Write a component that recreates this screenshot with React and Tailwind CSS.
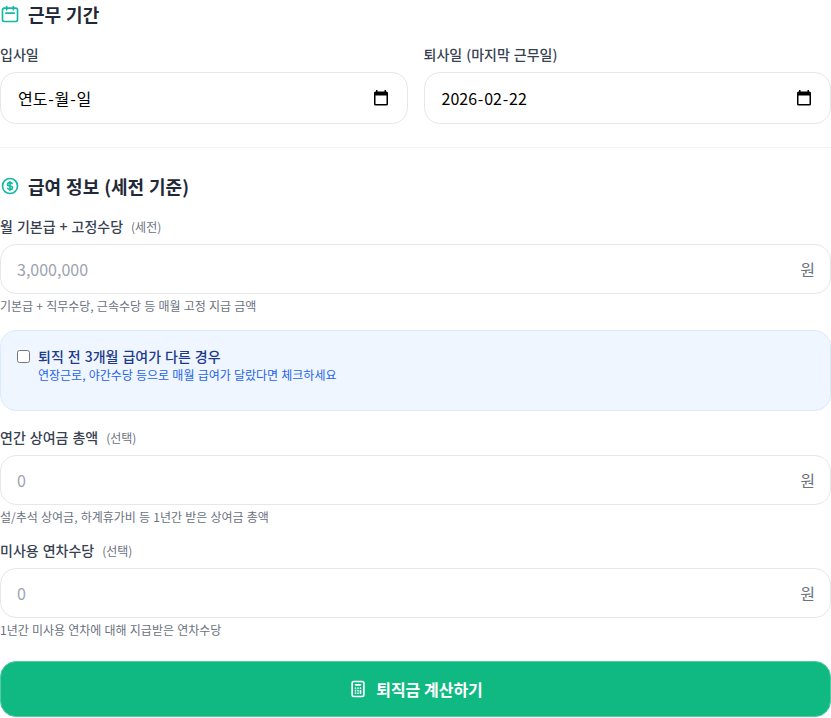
function CalendarPicker() {
  return (
    <svg width="20" height="20" viewBox="0 0 20 20" className="shrink-0">
      <path
        fill="#000"
        d="M5 2h1.5v1.5h7V2H15v1.5h.5A1.5 1.5 0 0 1 17 5v11a1.5 1.5 0 0 1-1.5 1.5h-11A1.5 1.5 0 0 1 3 16V5a1.5 1.5 0 0 1 1.5-1.5H5V2zM4.5 7.5V16h11V7.5h-11z"
      />
    </svg>
  );
}

function OutlineIcon({ d, className }) {
  return (
    <svg className={className} fill="none" stroke="currentColor" viewBox="0 0 24 24">
      <path strokeLinecap="round" strokeLinejoin="round" strokeWidth="2" d={d} />
    </svg>
  );
}

function DateField({ label, parts }) {
  return (
    <div>
      <label className="block mb-2 text-sm font-medium text-[#374151]">{label}</label>
      <div className="flex items-center justify-between h-[52px] pl-[17px] pr-[16px] bg-white border border-[#e5e7eb] rounded-2xl text-base text-black">
        <span>
          {parts[0]}
          <span className="px-[0.8px]">-</span>
          {parts[1]}
          <span className="px-[0.8px]">-</span>
          {parts[2]}
        </span>
        <CalendarPicker />
      </div>
    </div>
  );
}

function MoneyField({ label, note, placeholder, hint }) {
  return (
    <div>
      <label className="block mb-2 text-sm font-medium text-[#374151]">
        {label}
        {note ? <span className="ml-2 text-xs font-normal text-[#6b7280]">{note}</span> : null}
      </label>
      <div className="relative">
        <input
          type="text"
          placeholder={placeholder}
          className="w-full h-[50px] px-4 bg-white border border-[#e5e7eb] rounded-2xl text-base text-[#111827] placeholder:text-[#9ca3af]"
        />
        <span className="absolute right-4 top-1/2 -translate-y-1/2 text-base text-[#6b7280]">원</span>
      </div>
      <p className="mt-1 text-xs text-[#6b7280] [word-spacing:0.042em]">{hint}</p>
    </div>
  );
}

export default function App() {
  return (
    <div className="w-[831px] h-[718px] overflow-hidden bg-white font-['Noto_Sans_CJK_KR',sans-serif] [word-spacing:0.054em]">
      <section className="pb-[23px] border-b border-[#f3f4f6]">
        <h3 className="flex items-center gap-2 mb-4 text-lg font-bold text-[#1f2937]">
          <OutlineIcon
            className="w-5 h-5 text-[#14b8a6]"
            d="M8 7V3m8 4V3m-9 8h10M5 21h14a2 2 0 002-2V7a2 2 0 00-2-2H5a2 2 0 00-2 2v12a2 2 0 002 2z"
          />
          근무 기간
        </h3>
        <div className="grid grid-cols-2 gap-4">
          <DateField label="입사일" parts={["연도", "월", "일"]} />
          <DateField label="퇴사일 (마지막 근무일)" parts={["2026", "02", "22"]} />
        </div>
      </section>

      <section className="mt-6">
        <h3 className="flex items-center gap-2 mb-4 text-lg font-bold text-[#1f2937]">
          <OutlineIcon
            className="w-5 h-5 text-[#14b8a6]"
            d="M12 8c-1.657 0-3 .895-3 2s1.343 2 3 2 3 .895 3 2-1.343 2-3 2m0-8c1.11 0 2.08.402 2.599 1M12 8V7m0 1v8m0 0v1m0-1c-1.11 0-2.08-.402-2.599-1M21 12a9 9 0 11-18 0 9 9 0 0118 0z"
          />
          급여 정보 (세전 기준)
        </h3>
        <MoneyField
          label="월 기본급 + 고정수당"
          note="(세전)"
          placeholder="3,000,000"
          hint="기본급 + 직무수당, 근속수당 등 매월 고정 지급 금액"
        />
        <div className="h-[81px] mt-4 mb-4 px-4 pt-[15px] bg-[#eff6ff] border border-[#dbeafe] rounded-2xl">
          <label className="flex items-start gap-2">
            <input type="checkbox" className="w-[13px] h-[13px] mt-1" />
            <span>
              <span className="block text-sm font-medium text-[#1e3a8a]">퇴직 전 3개월 급여가 다른 경우</span>
              <span className="block mt-px text-xs text-[#2563eb] [word-spacing:0.042em]">연장근로, 야간수당 등으로 매월 급여가 달랐다면 체크하세요</span>
            </span>
          </label>
        </div>
        <div className="flex flex-col gap-[15px]">
          <MoneyField
            label="연간 상여금 총액"
            note="(선택)"
            placeholder="0"
            hint="설/추석 상여금, 하계휴가비 등 1년간 받은 상여금 총액"
          />
          <MoneyField
            label="미사용 연차수당"
            note="(선택)"
            placeholder="0"
            hint="1년간 미사용 연차에 대해 지급받은 연차수당"
          />
        </div>
        <button className="flex items-center justify-center gap-2 w-full h-14 mt-[23px] bg-[#10b981] border border-[#52cba0] rounded-2xl text-base font-bold text-white">
          <OutlineIcon
            className="w-5 h-5"
            d="M9 7h6m0 10v-3m-3 3h.01M9 17h.01M9 14h.01M12 14h.01M15 11h.01M12 11h.01M9 11h.01M7 21h10a2 2 0 002-2V5a2 2 0 00-2-2H7a2 2 0 00-2 2v14a2 2 0 002 2z"
          />
          퇴직금 계산하기
        </button>
      </section>
    </div>
  );
}
